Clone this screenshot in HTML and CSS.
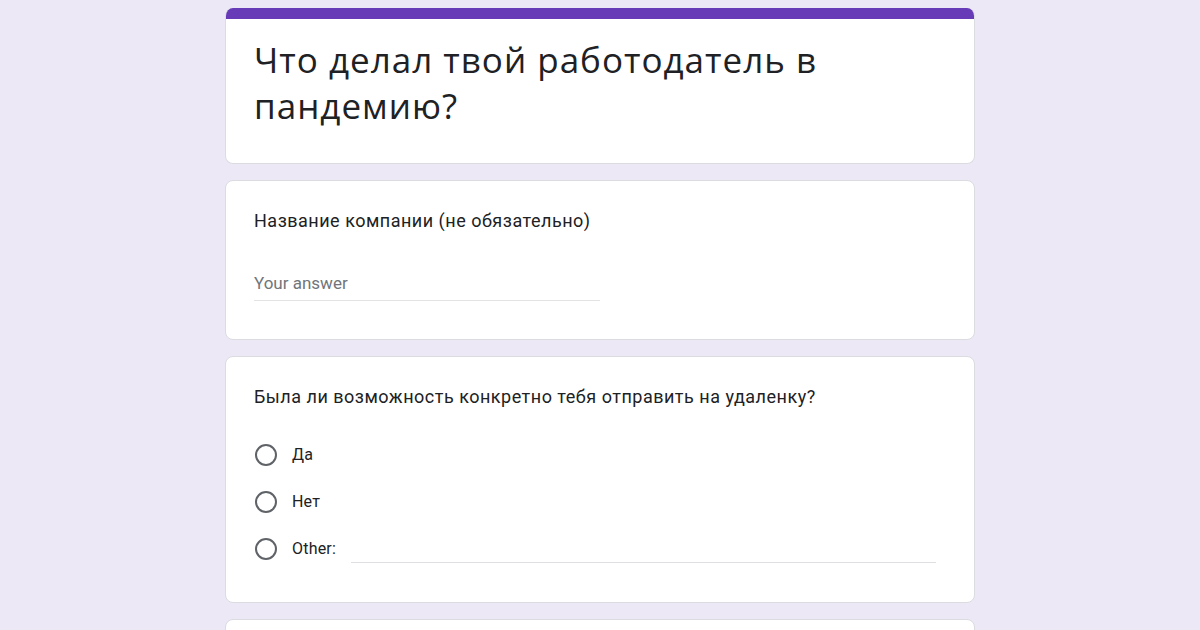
FILE: index.html
```html
<!DOCTYPE html>
<html lang="ru">
<head>
<meta charset="utf-8">
<title>Что делал твой работодатель в пандемию?</title>
<link rel="stylesheet" href="styles.css">
</head>
<body>
<main class="form">
  <section class="card card-header">
    <div class="accent"></div>
    <h1 class="form-title">Что делал твой работодатель в пандемию?</h1>
  </section>

  <section class="card question">
    <div class="q-title">Название компании (не обязательно)</div>
    <div class="text-input">
      <span class="placeholder">Your answer</span>
    </div>
  </section>

  <section class="card question">
    <div class="q-title">Была ли возможность конкретно тебя отправить на удаленку?</div>
    <div class="options">
      <div class="option"><span class="radio"></span><span class="opt-label">Да</span></div>
      <div class="option"><span class="radio"></span><span class="opt-label">Нет</span></div>
      <div class="option"><span class="radio"></span><span class="opt-label other">Other:</span><span class="other-line"></span></div>
    </div>
  </section>

  <section class="card question"></section>
</main>
</body>
</html>
```

FILE: styles.css
```css
html, body {
  margin: 0;
  padding: 0;
  background: #ede8f6;
  height: 630px;
  overflow: hidden;
}

body {
  font-family: Roboto, "Liberation Sans", sans-serif;
  color: #202124;
}

.form {
  width: 750px;
  margin: 0 auto;
  padding-top: 8px;
  display: flex;
  flex-direction: column;
  gap: 16px;
}

.card {
  background: #ffffff;
  border: 1px solid #dadce0;
  border-radius: 8px;
  box-sizing: border-box;
  overflow: hidden;
}

.card-header {
  height: 156px;
  border-top: none;
}

.accent {
  height: 11px;
  background: #673ab7;
}

.form-title {
  margin: 0;
  padding: 18px 28px 0 28px;
  font-family: "Open Sans", sans-serif;
  font-weight: 400;
  font-size: 35px;
  line-height: 46px;
  letter-spacing: 1px;
  color: #202124;
  max-width: 600px;
}

.question {
  padding: 28px 28px 0 28px;
}

.question:nth-child(2) {
  height: 160px;
}

.question:nth-child(3) {
  height: 247px;
}

.question:nth-child(4) {
  height: 60px;
}

.q-title {
  font-size: 18px;
  line-height: 24px;
  letter-spacing: 0.5px;
  color: #202124;
}

.text-input {
  margin-top: 39px;
  width: 346px;
  border-bottom: 1px solid #e3e3e6;
  padding-bottom: 6px;
}

.placeholder {
  font-size: 17px;
  line-height: 22px;
  color: #70757a;
}

.options {
  margin-top: 34px;
  display: flex;
  flex-direction: column;
  gap: 24px;
}

.option {
  display: flex;
  align-items: center;
  height: 23px;
}

.radio {
  width: 18px;
  height: 18px;
  border: 2px solid #5f6368;
  border-radius: 50%;
  margin-left: 1px;
  flex: none;
}

.opt-label {
  margin-left: 15px;
  font-size: 16px;
  color: #202124;
  letter-spacing: 0.2px;
}

.other-line {
  flex: 1;
  align-self: flex-end;
  margin-left: 15px;
  margin-right: 10px;
  border-bottom: 1px solid #dedfe2;
  height: 0;
  margin-bottom: -3px;
}
```
